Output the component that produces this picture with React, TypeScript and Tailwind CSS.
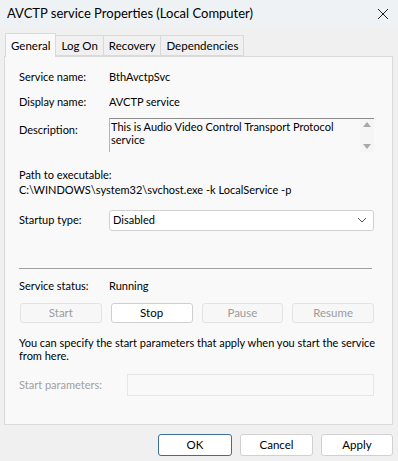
import React from 'react';

const font = { fontFamily: 'Lato, "Noto Sans", sans-serif' };

function Btn({ label, disabled, focus, size = 'w-[82px] h-[20px]' }: { label: string; disabled?: boolean; focus?: boolean; size?: string }) {
  return (
    <div
      className={`${size} flex items-center justify-center rounded-[3px] border text-[11.5px] ${
        disabled
          ? 'border-[#e3e3e3] bg-[#f7f7f7] text-[#9c9c9c]'
          : focus
          ? 'border-[#3c6e9a] border-[1.5px] bg-white text-black'
          : 'border-[#d0d0d0] bg-white text-black'
      }`}
    >
      {label}
    </div>
  );
}

function Row({ label, children, h = 'h-[25px]' }: { label: string; children: React.ReactNode; h?: string }) {
  return (
    <div className={`flex items-center ${h}`}>
      <div className="w-[90px] shrink-0">{label}</div>
      {children}
    </div>
  );
}

export default function App() {
  return (
    <div className="w-[398px] h-[461px] bg-[#f0f0f0] text-[11px] text-black flex flex-col overflow-hidden" style={font}>
      {/* title bar */}
      <div className="h-[27px] bg-[#eef2f5] flex items-center justify-between pl-[7px] pr-[9px]">
        <span className="text-[13px]">AVCTP service Properties (Local Computer)</span>
        <svg width="12" height="12" viewBox="0 0 12 12" className="text-[#222]">
          <path d="M1 1 L11 11 M11 1 L1 11" stroke="currentColor" strokeWidth="1" />
        </svg>
      </div>

      {/* tabs */}
      <div className="flex items-end pl-[5px] mt-[6px] h-[23px] relative z-10">
        <div className="h-[24px] px-[5px] bg-[#f9f9f9] border border-b-0 border-[#d9d9d9] flex items-start pt-[3px] -mb-px text-[11.5px]">General</div>
        <div className="h-[21px] px-[5px] bg-[#f0f0f0] border border-l-0 border-[#d9d9d9] flex items-center text-[11.5px]">Log On</div>
        <div className="h-[21px] px-[5px] bg-[#f0f0f0] border border-l-0 border-[#d9d9d9] flex items-center text-[11.5px]">Recovery</div>
        <div className="h-[21px] px-[5px] bg-[#f0f0f0] border border-l-0 border-[#d9d9d9] flex items-center text-[11.5px]">Dependencies</div>
      </div>

      {/* panel */}
      <div className="mx-[4px] mr-[5px] h-[369px] bg-[#f9f9f9] border border-[#dadada] pl-[14px] pr-[18px] pt-[8px] flex flex-col">
        <Row label="Service name:">BthAvctpSvc</Row>
        <Row label="Display name:">AVCTP service</Row>
        <div className="flex items-start h-[40px] mt-[3px]">
          <div className="w-[90px] shrink-0 pt-[4px]">Description:</div>
          <div className="flex-1 h-[34px] border-t border-l border-t-[#8c8c8c] border-l-[#b4b4b4] flex">
            <div className="flex-1 leading-[13px] pl-[1px] pt-[1px]">This is Audio Video Control Transport Protocol service</div>
            <div className="w-[14px] flex flex-col items-center justify-between py-[3px] bg-[#f5f5f5]">
              <svg width="8" height="5" viewBox="0 0 8 5"><path d="M0 5 L4 0 L8 5 Z" fill="#a8a8a8" /></svg>
              <svg width="8" height="5" viewBox="0 0 8 5"><path d="M0 0 L4 5 L8 0 Z" fill="#a8a8a8" /></svg>
            </div>
          </div>
        </div>
        <div className="mt-[9px] leading-[15px]">Path to executable:</div>
        <div className="leading-[15px]">C:\WINDOWS\system32\svchost.exe -k LocalService -p</div>
        <div className="flex items-center h-[22px] mt-[12px]">
          <div className="w-[90px] shrink-0">Startup type:</div>
          <div className="flex-1 h-[21px] bg-white border border-[#d0d0d0] rounded-[3px] flex items-center justify-between pl-[3px] pr-[6px]">
            <span>Disabled</span>
            <svg width="10" height="6" viewBox="0 0 10 6"><path d="M1 1 L5 5 L9 1" fill="none" stroke="#555" strokeWidth="1" /></svg>
          </div>
        </div>
        <div className="mt-[37px] h-px bg-[#a0a0a0] mr-[2px]" />
        <Row label="Service status:" h="h-[20px] mt-[7px]">Running</Row>
        <div className="flex gap-[9px] mt-[7px] pl-[1px]">
          <Btn label="Start" disabled />
          <Btn label="Stop" />
          <Btn label="Pause" disabled />
          <Btn label="Resume" disabled />
        </div>
        <div className="mt-[13px] leading-[13px] -mr-[12px]">You can specify the start parameters that apply when you start the service from here.</div>
        <div className="flex items-center h-[24px] mt-[11px]">
          <div className="w-[108px] shrink-0 text-[#a0a0a0]">Start parameters:</div>
          <div className="flex-1 h-[22px] border border-[#e6e6e6] bg-[#f9f9f9]" />
        </div>
      </div>

      {/* footer */}
      <div className="flex justify-end gap-[8px] pr-[5px] mt-[9px]">
        <Btn label="OK" focus size="w-[74px] h-[22px]" />
        <Btn label="Cancel" size="w-[73px] h-[22px]" />
        <Btn label="Apply" size="w-[72px] h-[22px]" />
      </div>
    </div>
  );
}
